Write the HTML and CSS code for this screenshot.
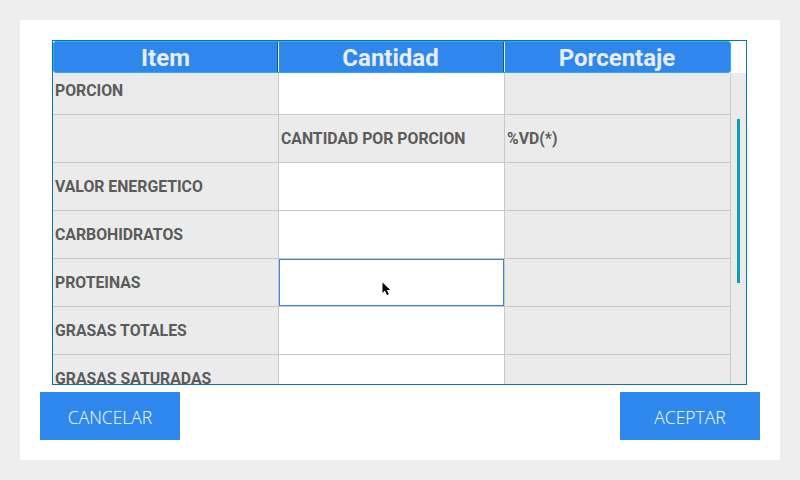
FILE: index.html
```html
<!DOCTYPE html>
<html lang="es">
<head>
<meta charset="utf-8">
<title>Tabla nutricional</title>
<link rel="stylesheet" href="styles.css">
</head>
<body>
<div class="panel">
  <div class="frame">
    <div class="head">
      <div class="head-cells">
        <div class="hc">Item</div>
        <div class="hc">Cantidad</div>
        <div class="hc">Porcentaje</div>
      </div>
      <div class="head-gap"></div>
    </div>
    <div class="body">
      <div class="rows">
        <div class="row first">
          <div class="cell label">PORCION</div>
          <div class="cell input"></div>
          <div class="cell"></div>
        </div>
        <div class="row">
          <div class="cell label"></div>
          <div class="cell label">CANTIDAD POR PORCION</div>
          <div class="cell label">%VD(*)</div>
        </div>
        <div class="row">
          <div class="cell label">VALOR ENERGETICO</div>
          <div class="cell input"></div>
          <div class="cell"></div>
        </div>
        <div class="row">
          <div class="cell label">CARBOHIDRATOS</div>
          <div class="cell input"></div>
          <div class="cell"></div>
        </div>
        <div class="row">
          <div class="cell label">PROTEINAS</div>
          <div class="cell input selected">
            <svg class="cursor" width="10" height="14" viewBox="0 0 10 14"><path d="M0.5 0.5 L0.5 11 L3 8.6 L5 13 L6.8 12.2 L4.9 8 L8.2 8 Z" fill="#000"/></svg>
          </div>
          <div class="cell"></div>
        </div>
        <div class="row">
          <div class="cell label">GRASAS TOTALES</div>
          <div class="cell input"></div>
          <div class="cell"></div>
        </div>
        <div class="row">
          <div class="cell label">GRASAS SATURADAS</div>
          <div class="cell input"></div>
          <div class="cell"></div>
        </div>
      </div>
      <div class="scroll"><div class="thumb"></div></div>
    </div>
  </div>
  <div class="actions">
    <button class="btn">CANCELAR</button>
    <button class="btn">ACEPTAR</button>
  </div>
</div>
</body>
</html>
```
FILE: styles.css
```css
* { box-sizing: border-box; }
html, body { margin: 0; padding: 0; }
body {
  background: #eeeeee;
  width: 800px;
  height: 480px;
  overflow: hidden;
  font-family: Roboto, "Liberation Sans", sans-serif;
}
.panel {
  margin: 20px;
  width: 760px;
  height: 440px;
  background: #ffffff;
  padding: 20px;
  display: flex;
  flex-direction: column;
}
.frame {
  margin: 0 13px 0 12px;
  height: 345px;
  border: 1px solid #0a76a8;
  display: flex;
  flex-direction: column;
  background: #ffffff;
}
.head {
  height: 32px;
  display: flex;
  flex: none;
}
.head-cells {
  width: 678px;
  display: grid;
  grid-template-columns: 223px 226px 1fr;
  background: #2f87ee;
  border: 1px solid #2aaaf2;
  border-radius: 3px;
}
.hc {
  display: flex;
  align-items: center;
  justify-content: center;
  color: #e8eef6;
  font-weight: 700;
  font-size: 24px;
  padding-top: 2px;
}
.hc + .hc {
  border-left: 1px solid #0c5e8a;
  box-shadow: inset 1px 0 0 #e6f1fb;
}
.head-gap { flex: 1; background: #ffffff; }
.body {
  flex: 1;
  display: flex;
  overflow: hidden;
}
.rows { width: 678px; overflow: hidden; }
.row {
  display: grid;
  grid-template-columns: 226px 226px 226px;
  height: 48px;
}
.row.first { height: 42px; }
.cell {
  background: #eaebea;
  border-right: 1px solid #c8c8c8;
  border-bottom: 1px solid #c8c8c8;
  display: flex;
  align-items: center;
  padding-left: 2px;
  font-size: 15.8px;
  font-weight: 700;
  color: #5b5b5b;
  white-space: nowrap;
}
.row.first .cell { padding-bottom: 7px; }
.cell.input { background: #ffffff; }
.cell.selected {
  position: relative;
  box-shadow: inset 0 0 0 1px #3d85d6;
}
.cursor {
  position: absolute;
  left: 103px;
  top: 23px;
}
.scroll {
  flex: 1;
  background: #eaebea;
  padding-left: 6px;
}
.thumb {
  width: 3px;
  height: 164px;
  margin-top: 46px;
  background: #0a9db5;
}
.actions {
  margin-top: 7px;
  display: flex;
  justify-content: space-between;
}
.btn {
  width: 140px;
  height: 48px;
  background: #2f88ee;
  border: none;
  color: #ffffff;
  font-family: "Open Sans", "Liberation Sans", sans-serif;
  font-weight: 300;
  font-size: 17.5px;
  padding: 0;
  padding-top: 1px;
}
```
